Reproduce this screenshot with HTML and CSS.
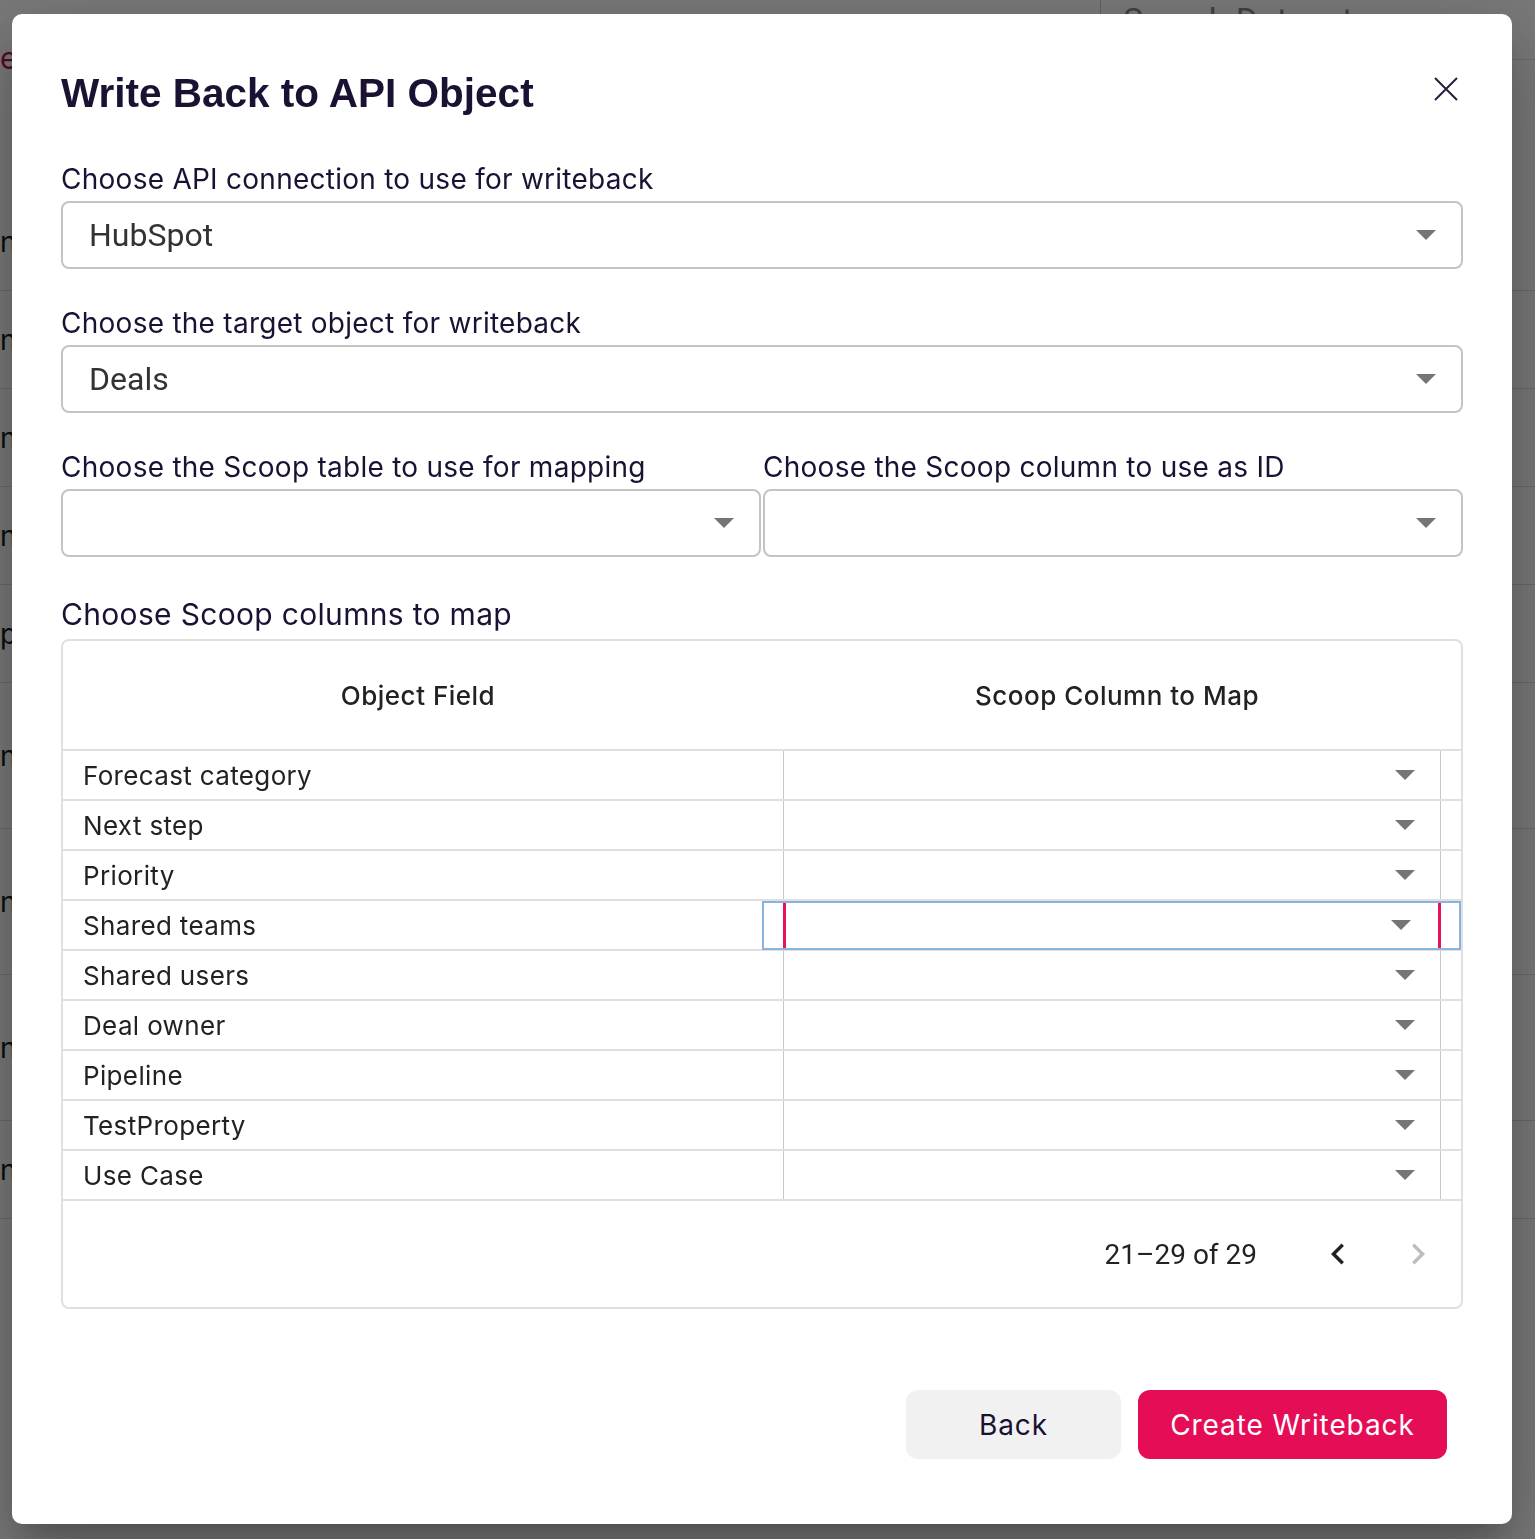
FILE: index.html
```html
<!DOCTYPE html>
<html lang="en">
<head>
    <meta charset="UTF-8">
    <meta name="viewport" content="width=device-width, initial-scale=1.0">
    <title>Write Back to API Object</title>
    <link rel="stylesheet" href="styles.css">
</head>
<body>
    <!-- page behind the dialog -->
    <div class="page">
        <div class="page-top">
            <div class="brand">e</div>
            <div class="search">Search Datasets</div>
        </div>
        <div class="page-list">
            <div class="page-row"><div class="page-cell">ns</div></div>
            <div class="page-row"><div class="page-cell">ns</div></div>
            <div class="page-row"><div class="page-cell">ns</div></div>
            <div class="page-row"><div class="page-cell">ns</div></div>
            <div class="page-row"><div class="page-cell">p</div></div>
            <div class="page-row tall"><div class="page-cell">ns</div></div>
            <div class="page-row tall"><div class="page-cell">ns</div></div>
            <div class="page-row tall"><div class="page-cell">ns</div></div>
            <div class="page-row"><div class="page-cell">ns</div></div>
        </div>
    </div>

    <div class="backdrop">
        <div class="dialog">
            <div class="dialog-head">
                <h2>Write Back to API Object</h2>
                <button class="close-btn" aria-label="Close">
                    <svg width="24" height="24" viewBox="0 0 24 24"><path d="M1 1L23 23M23 1L1 23" stroke="#2b1d3d" stroke-width="2" fill="none"/></svg>
                </button>
            </div>

            <div class="field">
                <label>Choose API connection to use for writeback</label>
                <div class="select">
                    <span>HubSpot</span>
                    <svg class="caret" width="20" height="10" viewBox="0 0 20 10"><polygon points="0,0 20,0 10,10" fill="#757575"/></svg>
                </div>
            </div>

            <div class="field">
                <label>Choose the target object for writeback</label>
                <div class="select">
                    <span>Deals</span>
                    <svg class="caret" width="20" height="10" viewBox="0 0 20 10"><polygon points="0,0 20,0 10,10" fill="#757575"/></svg>
                </div>
            </div>

            <div class="field-pair">
                <div class="field">
                    <label>Choose the Scoop table to use for mapping</label>
                    <div class="select">
                        <span></span>
                        <svg class="caret" width="20" height="10" viewBox="0 0 20 10"><polygon points="0,0 20,0 10,10" fill="#757575"/></svg>
                    </div>
                </div>
                <div class="field">
                    <label>Choose the Scoop column to use as ID</label>
                    <div class="select">
                        <span></span>
                        <svg class="caret" width="20" height="10" viewBox="0 0 20 10"><polygon points="0,0 20,0 10,10" fill="#757575"/></svg>
                    </div>
                </div>
            </div>

            <div class="map-title">Choose Scoop columns to map</div>

            <div class="grid">
                <div class="grid-head">
                    <div>Object Field</div>
                    <div>Scoop Column to Map</div>
                </div>
                <div class="grid-row">
                    <div class="cell-name">Forecast category</div>
                    <div class="cell-pick"><svg width="20" height="10" viewBox="0 0 20 10"><polygon points="0,0 20,0 10,10" fill="#757575"/></svg></div>
                    <div></div>
                </div>
                <div class="grid-row">
                    <div class="cell-name">Next step</div>
                    <div class="cell-pick"><svg width="20" height="10" viewBox="0 0 20 10"><polygon points="0,0 20,0 10,10" fill="#757575"/></svg></div>
                    <div></div>
                </div>
                <div class="grid-row">
                    <div class="cell-name">Priority</div>
                    <div class="cell-pick"><svg width="20" height="10" viewBox="0 0 20 10"><polygon points="0,0 20,0 10,10" fill="#757575"/></svg></div>
                    <div></div>
                </div>
                <div class="grid-row focused">
                    <div class="cell-name">Shared teams</div>
                    <div class="cell-pick"><svg width="20" height="10" viewBox="0 0 20 10"><polygon points="0,0 20,0 10,10" fill="#757575"/></svg></div>
                    <div></div>
                </div>
                <div class="grid-row">
                    <div class="cell-name">Shared users</div>
                    <div class="cell-pick"><svg width="20" height="10" viewBox="0 0 20 10"><polygon points="0,0 20,0 10,10" fill="#757575"/></svg></div>
                    <div></div>
                </div>
                <div class="grid-row">
                    <div class="cell-name">Deal owner</div>
                    <div class="cell-pick"><svg width="20" height="10" viewBox="0 0 20 10"><polygon points="0,0 20,0 10,10" fill="#757575"/></svg></div>
                    <div></div>
                </div>
                <div class="grid-row">
                    <div class="cell-name">Pipeline</div>
                    <div class="cell-pick"><svg width="20" height="10" viewBox="0 0 20 10"><polygon points="0,0 20,0 10,10" fill="#757575"/></svg></div>
                    <div></div>
                </div>
                <div class="grid-row">
                    <div class="cell-name">TestProperty</div>
                    <div class="cell-pick"><svg width="20" height="10" viewBox="0 0 20 10"><polygon points="0,0 20,0 10,10" fill="#757575"/></svg></div>
                    <div></div>
                </div>
                <div class="grid-row">
                    <div class="cell-name">Use Case</div>
                    <div class="cell-pick"><svg width="20" height="10" viewBox="0 0 20 10"><polygon points="0,0 20,0 10,10" fill="#757575"/></svg></div>
                    <div></div>
                </div>
                <div class="grid-foot">
                    <span class="page-count">21–29 of 29</span>
                    <button class="page-btn prev" aria-label="Previous page">
                        <svg width="42" height="42" viewBox="0 0 24 24"><path d="M15.41 16.59 10.83 12l4.58-4.59L14 6l-6 6 6 6z" fill="#222"/></svg>
                    </button>
                    <button class="page-btn next" aria-label="Next page" disabled>
                        <svg width="42" height="42" viewBox="0 0 24 24"><path d="M8.59 16.59 13.17 12 8.59 7.41 10 6l6 6-6 6z" fill="#bdbdbd"/></svg>
                    </button>
                </div>
            </div>

            <div class="actions">
                <button class="btn back-btn">Back</button>
                <button class="btn create-btn">Create Writeback</button>
            </div>
        </div>
    </div>
</body>
</html>
```

FILE: styles.css
```css
* {
    box-sizing: border-box;
}
html, body {
    margin: 0;
    height: 100%;
    overflow: hidden;
}
body {
    font-family: Inter, "Liberation Sans", sans-serif;
    background: #fff;
    color: #222;
}
button {
    font-family: inherit;
    border: none;
    background: none;
    padding: 0;
    cursor: pointer;
}

/* page behind */
.page-top {
    display: flex;
    height: 60px;
}
.brand {
    padding-top: 40px;
    font-size: 30px;
    line-height: 36px;
    color: #b3124a;
}
.search {
    margin-left: auto;
    width: 435px;
    border-left: 1px solid #ccc;
    border-bottom: 1px solid #ddd;
    padding-left: 22px;
    font-family: Roboto, sans-serif;
    font-size: 34px;
    line-height: 40px;
    color: #8a8a8a;
}
.page-list {
    margin-top: 133px;
}
.page-row {
    height: 98px;
    border-bottom: 1px solid #ddd;
    display: flex;
    align-items: center;
}
.page-row.tall {
    height: 146px;
}
.page-cell {
    font-size: 28px;
    color: #1a1a1a;
}

/* dialog */
.backdrop {
    position: fixed;
    inset: 0;
    background: rgba(0, 0, 0, 0.53);
    padding: 14px 23px 15px 12px;
    display: flex;
}
.dialog {
    flex: 1;
    background: #fff;
    border-radius: 10px;
    box-shadow: 0 19px 26px -12px rgba(0,0,0,0.2), 0 42px 66px 5px rgba(0,0,0,0.14), 0 16px 80px 14px rgba(0,0,0,0.12);
    padding: 55px 49px 65px;
    display: flex;
    flex-direction: column;
    color: #1b1133;
}
.dialog-head {
    display: flex;
    justify-content: space-between;
    align-items: flex-start;
    margin-bottom: 42px;
}
.dialog-head h2 {
    margin: 0;
    font-family: "Liberation Sans", Arial, sans-serif;
    font-size: 40.5px;
    line-height: 48px;
    font-weight: bold;
    color: #1b1133;
}
.close-btn {
    width: 24px;
    height: 24px;
    margin-top: 8px;
    margin-right: 5px;
}
.close-btn svg {
    display: block;
}

.field {
    margin-bottom: 34px;
}
.field label {
    display: block;
    font-size: 28px;
    line-height: 40px;
    letter-spacing: 0.26px;
    margin-bottom: 2px;
}
.select {
    height: 68px;
    border: 2px solid #c4c4c4;
    border-radius: 8px;
    display: flex;
    align-items: center;
    justify-content: space-between;
    padding: 0 25px 0 26px;
    font-family: Roboto, sans-serif;
    font-size: 32px;
    color: #333;
}
.field-pair {
    display: grid;
    grid-template-columns: 1fr 1fr;
    gap: 2px;
}
.map-title {
    font-size: 30px;
    line-height: 40px;
    letter-spacing: 0.32px;
    margin-top: 3px;
    margin-bottom: 5px;
}

/* mapping grid */
.grid {
    border: 2px solid #e0e0e0;
    border-radius: 8px;
}
.grid-head {
    display: grid;
    grid-template-columns: 720px 1fr;
    height: 110px;
    border-bottom: 2px solid #e0e0e0;
    font-size: 26px;
    font-weight: 500;
    letter-spacing: 0.5px;
    color: #222;
}
.grid-head div {
    display: flex;
    align-items: center;
    justify-content: center;
    padding-right: 10px;
}
.grid-row {
    display: grid;
    grid-template-columns: 720px 658px 1fr;
    height: 50px;
    border-bottom: 2px solid #e0e0e0;
    position: relative;
}
.cell-name {
    display: flex;
    align-items: center;
    padding-left: 20px;
    font-size: 26px;
    letter-spacing: 0.35px;
    color: #222;
}
.cell-pick {
    border-left: 1px solid #c8c8c8;
    border-right: 1px solid #c8c8c8;
    display: flex;
    align-items: center;
    justify-content: flex-end;
    padding-right: 25px;
}
.grid-row.focused .cell-pick {
    border-color: #e8115b;
    box-shadow: inset 2px 0 #e8115b, inset -2px 0 #e8115b;
    padding-right: 29px;
}
.grid-row.focused::after {
    content: "";
    position: absolute;
    left: 699px;
    right: 0;
    top: 0;
    bottom: -1px;
    border: 2px solid #86b3df;
    pointer-events: none;
}
.grid-foot {
    height: 106px;
    display: flex;
    align-items: center;
    justify-content: flex-end;
    padding-right: 22px;
    font-family: Roboto, sans-serif;
    font-size: 28px;
    color: #222;
}
.page-btn {
    width: 42px;
    height: 42px;
}
.page-btn svg {
    display: block;
}
.page-btn.prev {
    margin-left: 60px;
}
.page-btn.next {
    margin-left: 38px;
    cursor: default;
}

/* buttons */
.actions {
    margin-top: auto;
    display: flex;
    justify-content: flex-end;
    gap: 17px;
    padding-right: 16px;
}
.btn {
    height: 69px;
    border-radius: 12px;
    font-size: 28px;
    letter-spacing: 0.9px;
}
.back-btn {
    width: 215px;
    background: #f1f1f1;
    color: #1b1133;
}
.create-btn {
    width: 309px;
    background: #e60d57;
    color: #fff;
}
```
